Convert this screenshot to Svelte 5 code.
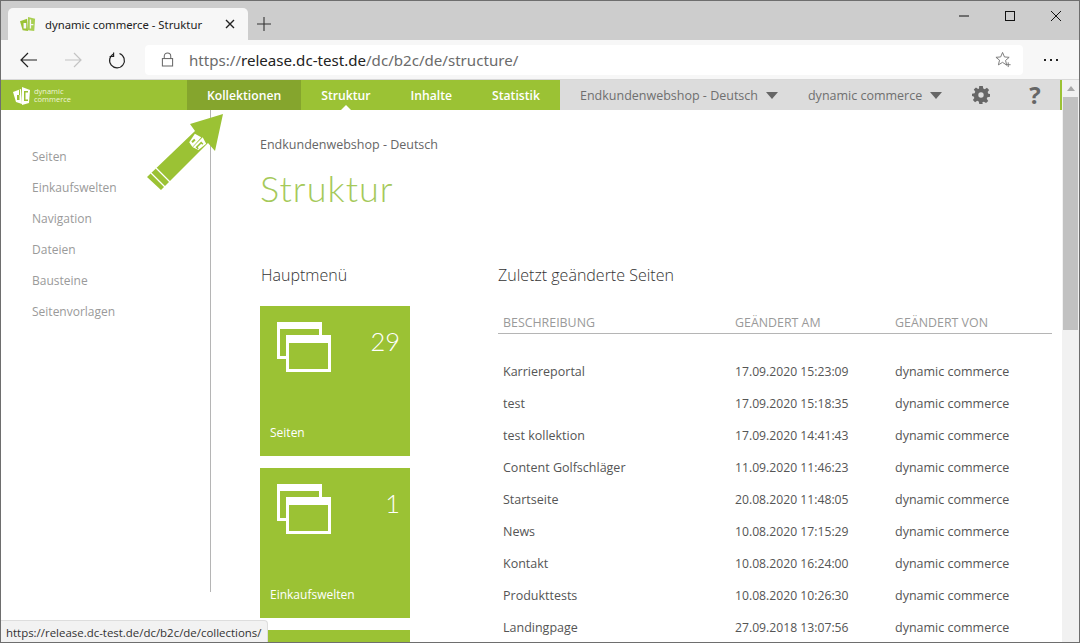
<script>
  const side = ['Seiten', 'Einkaufswelten', 'Navigation', 'Dateien', 'Bausteine', 'Seitenvorlagen'];
  const tiles = [
    { n: '29', label: 'Seiten' },
    { n: '1', label: 'Einkaufswelten' },
    { n: '', label: '' }
  ];
  const rows = [
    ['Karriereportal', '17.09.2020 15:23:09'],
    ['test', '17.09.2020 15:18:35'],
    ['test kollektion', '17.09.2020 14:41:43'],
    ['Content Golfschläger', '11.09.2020 11:46:23'],
    ['Startseite', '20.08.2020 11:48:05'],
    ['News', '10.08.2020 17:15:29'],
    ['Kontakt', '10.08.2020 16:24:00'],
    ['Produkttests', '10.08.2020 10:26:30'],
    ['Landingpage', '27.09.2018 13:07:56']
  ];
</script>

<div class="window">
  <div class="tabstrip">
    <div class="tab">
      <svg class="fav" viewBox="0 0 18 18" width="16" height="16"><path d="M0 6l8-3 1 14-6-1z" fill="#9bc234"/><path d="M9 1l8 2-1 14-7-1z" fill="#a9cf52"/><path d="M4 8h3v6H4zM11 4h1.500v5H15v1.500h-2.500V14H11z" fill="#f7f7f7"/></svg>
      <span class="tabtitle">dynamic commerce - Struktur</span>
      <svg class="tabx" viewBox="0 0 10 10" width="10" height="10"><path d="M1 1l8 8M9 1l-8 8" stroke="#222" stroke-width="1.4"/></svg>
    </div>
    <svg class="plus" viewBox="0 0 14 14" width="14" height="14"><path d="M7 0v14M0 7h14" stroke="#333" stroke-width="1.1"/></svg>
    <div class="winbtns">
      <svg viewBox="0 0 12 12" width="12" height="12"><path d="M1 6h10" stroke="#111" stroke-width="1"/></svg>
      <svg viewBox="0 0 12 12" width="12" height="12"><rect x="1.500" y="1.500" width="9" height="9" fill="none" stroke="#111"/></svg>
      <svg viewBox="0 0 12 12" width="12" height="12"><path d="M1 1l10 10M11 1L1 11" stroke="#111"/></svg>
    </div>
  </div>

  <div class="toolbar">
    <svg class="navi back" viewBox="0 0 18 16" width="18" height="16"><path d="M1 8h16M8 1L1 8l7 7" fill="none" stroke="#222" stroke-width="1.200"/></svg>
    <svg class="navi fwd" viewBox="0 0 18 16" width="18" height="16"><path d="M1 8h16M10 1l7 7-7 7" fill="none" stroke="#c4c4c4" stroke-width="1.200"/></svg>
    <svg class="navi reload" viewBox="0 0 18 18" width="18" height="18"><path d="M6 2.200A7.400 7.400 0 1 0 11.500 2M5.600 1v4h-4" fill="none" stroke="#222" stroke-width="1.200" transform="translate(0 .5)"/></svg>
    <div class="url">
      <svg class="lock" viewBox="0 0 14 16" width="13" height="15"><path d="M3.500 7V4.500a3.500 3.500 0 0 1 7 0V7" fill="none" stroke="#666" stroke-width="1.100"/><rect x="1.500" y="7" width="11" height="8" fill="none" stroke="#666" stroke-width="1.100"/></svg>
      <span class="urltext"><span class="dim">https://</span><span class="host">release.dc-test.de</span><span class="dim">/dc/b2c/de/structure/</span></span>
      <svg class="star" viewBox="0 0 18 18" width="17" height="17"><path d="M8 1.500l2 4.800 5 .4-3.800 3.300 1.200 5L8 12l-4.400 2.700 1.200-5L1 6.700l5-.4z" fill="none" stroke="#777" stroke-width="1"/><path d="M14 12v5M11.500 14.500h5" stroke="#777"/></svg>
    </div>
    <div class="more"><i></i><i></i><i></i></div>
  </div>

  <nav class="appnav">
    <div class="brand">
      <svg viewBox="0 0 18 19" width="18" height="19"><path d="M0 6l8-3 1 15-6-2z" fill="#fff"/><path d="M9 1l8 3-1 13-7 2z" fill="#fff"/><path d="M4 9h2.500v5H4zM6 3.500h1V9H6zM11 5h4v1.500h-2.500v7H15V15h-4z" fill="#9bc234"/></svg>
      <span class="brandtext">dynamic<br>commerce</span>
    </div>
    <a class="item active">Kollektionen</a>
    <a class="item current">Struktur</a>
    <a class="item">Inhalte</a>
    <a class="item">Statistik</a>
    <div class="greybar">
      <span class="drop first">Endkundenwebshop - Deutsch <b></b></span>
      <span class="drop second">dynamic commerce <b></b></span>
      <svg class="gear" viewBox="0 0 20 20" width="18" height="18"><path fill="#666" fill-rule="evenodd" d="M8 0h4l.5 2.800 1.700.7L16.600 2 19 4.500l-1.600 2.300.7 1.700L20 9v3l-2.900.6-.7 1.700 1.600 2.300-2.400 2.400-2.400-1.600-1.700.7L11.900 20H8.100l-.6-2.900-1.700-.7-2.400 1.600L1 15.600l1.600-2.300-.7-1.700L0 11V8.500l2.900-.5.700-1.700L2 4l2.400-2.400L6.800 3.200l1-.4zM10 7a3 3 0 1 0 0 6 3 3 0 0 0 0-6z"/></svg>
      <span class="help">?</span>
    </div>
  </nav>

  <div class="page">
    <aside class="side">
      {#each side as s}<a>{s}</a>{/each}
    </aside>
    <main class="main">
      <p class="crumb">Endkundenwebshop - Deutsch</p>
      <h1>Struktur</h1>
      <div class="cols">
        <section class="left">
          <h2>Hauptmenü</h2>
          {#each tiles as t}
            <div class="tile">
              {#if t.label}
                <svg class="winicon" viewBox="0 0 56 52" width="56" height="52"><path d="M1 0h45v13h-3V7H4v27h6v3H1z" fill="#fff"/><path fill="#fff" fill-rule="evenodd" d="M10 13h45v37H10zM13 21v26h39V21z"/></svg>
                <span class="count">{t.n}</span>
                <span class="tlabel">{t.label}</span>
              {/if}
            </div>
          {/each}
        </section>
        <section class="right">
          <h2>Zuletzt geänderte Seiten</h2>
          <table>
            <thead><tr><th>BESCHREIBUNG</th><th>GEÄNDERT AM</th><th>GEÄNDERT VON</th></tr></thead>
            <tbody>
              {#each rows as r}
                <tr><td>{r[0]}</td><td class="date">{r[1]}</td><td>dynamic commerce</td></tr>
              {/each}
            </tbody>
          </table>
        </section>
      </div>
    </main>
    <div class="scrollbar">
      <svg viewBox="0 0 10 6" width="8" height="5"><path d="M0 6l5-6 5 6z" fill="#a8a8a8"/></svg>
      <div class="thumb"></div>
    </div>
  </div>

  <svg class="arrow" viewBox="0 0 80 80" width="80" height="80">
    <path d="M76 0L68 37 61 29 14 76 0 63 48 17 43 10z" fill="#9bc234"/>
    <path d="M4 59l14 14M9 54l14 14" stroke="#fff" stroke-width="1.300"/>
    <g transform="rotate(45 50 29)"><path d="M42 24l7-2 .5 13-5.500-1z" fill="#fff"/><path d="M50 21l7 2-1 10-6 2z" fill="#fff"/><path d="M45 28h2v4h-2zM52 25h3v1.500h-1.500v5H55V33h-3z" fill="#9bc234"/></g>
  </svg>

  <div class="status">https://release.dc-test.de/dc/b2c/de/collections/</div>
</div>

<style>
  :global(body) { margin: 0; background: #fff; overflow: hidden; }
  .window {
    position: relative;
    box-sizing: border-box;
    width: 1080px;
    height: 643px;
    overflow: hidden;
    display: flex;
    flex-direction: column;
    border: 1px solid #6e6e6e;
    font-family: "Open Sans", "Noto Sans", sans-serif;
  }
  .tabstrip {
    flex: 0 0 39px;
    background: #cdcdcd;
    display: flex;
    align-items: flex-end;
    padding-left: 7px;
  }
  .tab {
    box-sizing: border-box;
    width: 240px;
    height: 32px;
    background: #f7f7f7;
    border-radius: 5px 5px 0 0;
    display: flex;
    align-items: center;
    padding-left: 12px;
  }
  .fav { flex: none; }
  .tabtitle { margin-left: 9px; font: 11.300px "Noto Sans", sans-serif; color: #222; white-space: nowrap; }
  .tabx { margin-left: auto; margin-right: 13px; }
  .plus { margin: 0 0 9px 9px; }
  .winbtns { margin-left: auto; align-self: flex-start; display: flex; gap: 34px; padding: 9px 17px 0 0; }
  .toolbar {
    flex: 0 0 40px;
    box-sizing: border-box;
    background: #f7f7f7;
    display: flex;
    align-items: center;
    border-bottom: 1px solid #d8d8d8;
  }
  .navi { flex: none; }
  .back { margin-left: 19px; }
  .fwd { margin-left: 26px; }
  .reload { margin-left: 26px; }
  .url {
    flex: 0 0 878px;
    box-sizing: border-box;
    height: 30px;
    margin-left: 19px;
    background: #fff;
    border-radius: 4px;
    display: flex;
    align-items: center;
    padding: 0 11px 0 16px;
  }
  .urltext { margin-left: 15px; font: 15.100px "Noto Sans", sans-serif; white-space: nowrap; }
  .dim { color: #6b6b6b; }
  .host { color: #222; }
  .star { margin-left: auto; }
  .more { display: flex; gap: 4px; margin-left: 21px; }
  .more i { width: 2px; height: 2px; background: #222; }
  .appnav {
    flex: 0 0 30px;
    display: flex;
    background: #9bc234;
    color: #fff;
    font-size: 12.200px;
    font-weight: 600;
  }
  .brand { width: 186px; display: flex; align-items: center; padding-left: 12px; box-sizing: border-box; gap: 3px; }
  .brandtext { font-size: 7.500px; font-weight: 400; line-height: 8px; color: #eef5d8; }
  .item { display: flex; align-items: center; padding: 0 20px; position: relative; white-space: nowrap; }
  .item.active { background: #85a52d; }
  .item.current::after {
    content: "";
    position: absolute;
    left: 50%;
    bottom: 0;
    margin-left: -5px;
    border: 5px solid transparent;
    border-top: 0;
    border-bottom-color: #fff;
  }
  .greybar {
    flex: 1;
    background: #dcdcdc;
    color: #6f6f6f;
    display: flex;
    align-items: center;
    font-size: 12.500px;
    font-weight: 400;
    padding-left: 20px;
    margin-right: 18px;
    border-right: 1px solid #9bc234;
  }
  .drop { display: flex; align-items: center; white-space: nowrap; }
  .drop b { width: 0; height: 0; margin-left: 8px; border: 6px solid transparent; border-bottom: 0; border-top: 7px solid #666; }
  .second { margin-left: 30px; }
  .gear { margin-left: 30px; }
  .help { margin-left: 39px; font-size: 24px; font-weight: 700; color: #666; line-height: 30px; }
  .page { flex: 1; display: flex; min-height: 0; }
  .side {
    flex: 0 0 210px;
    height: 482px;
    box-sizing: border-box;
    border-right: 1px solid #b5b5b5;
    padding: 38px 0 0 31px;
    display: flex;
    flex-direction: column;
    gap: 13px;
  }
  .side a { font-size: 12px; line-height: 18px; color: #9a9a9a; }
  .main { flex: 1; padding: 0 0 0 49px; min-width: 0; }
  .crumb { margin: 26px 0 0; font-size: 12.500px; line-height: 17px; color: #666; }
  h1 { margin: 12px 0 0; font: 300 36px/46px Lato, sans-serif; color: #a5c95a; letter-spacing: 1.050px; }
  .cols { display: flex; margin-top: 54px; }
  .left { flex: 0 0 238px; }
  h2 { margin: 0; font-size: 16px; font-weight: 300; line-height: 20px; color: #333; }
  .left h2 { margin: 0 0 21px 1px; }
  .tile { position: relative; width: 150px; height: 150px; background: #9bc234; margin-bottom: 12px; color: #fff; }
  .winicon { position: absolute; left: 16px; top: 16px; }
  .count { position: absolute; right: 10px; top: 19px; font: 300 25.500px/32px Lato, sans-serif; }
  .tlabel { position: absolute; left: 10px; bottom: 15px; font-size: 12px; line-height: 17px; }
  .right { width: 554px; }
  table { width: 100%; border-collapse: collapse; margin-top: 21px; table-layout: fixed; }
  th {
    text-align: left;
    font-size: 12.400px;
    font-weight: 400;
    color: #9a9a9a;
    height: 21px;
    padding: 6px 0 0 5px;
    border-bottom: 1px solid #b5b5b5;
    white-space: nowrap;
  }
  th:nth-child(1) { width: 227px; }
  th:nth-child(2) { width: 155px; }
  tbody::before { content: ""; display: block; height: 21px; }
  td { font-size: 12.500px; color: #555; height: 32px; padding: 0 0 0 5px; white-space: nowrap; }
  td.date { font-size: 12.200px; }
  .scrollbar {
    flex: 0 0 17px;
    margin-left: auto;
    margin-top: -30px;
    background: #f1f1f1;
    display: flex;
    flex-direction: column;
    align-items: center;
    padding-top: 6px;
    box-sizing: border-box;
  }
  .thumb { width: 15px; height: 233px; background: #c1c1c1; margin-top: 6px; }
  .arrow { position: absolute; left: 146px; top: 113px; }
  .status {
    position: absolute;
    left: 0;
    bottom: 0;
    height: 22px;
    box-sizing: border-box;
    padding: 3px 6px 0 5px;
    background: #f2f2f2;
    border: 1px solid #ddd;
    border-left: 0;
    border-bottom: 0;
    border-radius: 0 4px 0 0;
    font-size: 11.450px;
    line-height: 17px;
    color: #333;
    white-space: nowrap;
  }
</style>
